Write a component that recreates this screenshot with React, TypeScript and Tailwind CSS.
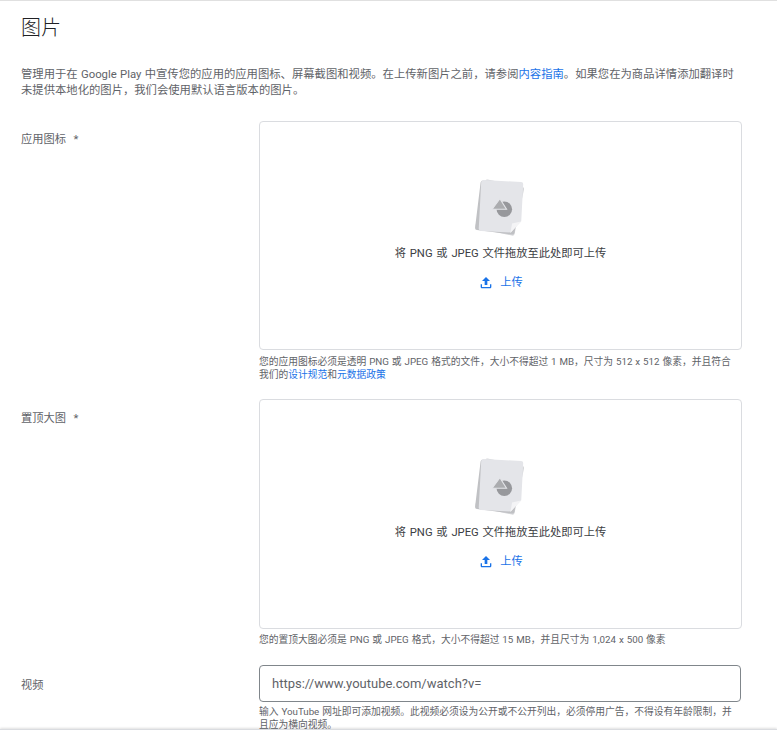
import { ReactNode } from 'react';

function PlaceholderIcon() {
  return (
    <svg width="62" height="62" viewBox="0 0 56 56">
      <rect x="9" y="6" width="36" height="45" rx="2" fill="#d6d7da" transform="rotate(12 27 28)" />
      <rect x="7" y="6" width="36" height="45" rx="2" fill="#c0c1c4" transform="rotate(7 25 28)" />
      <path d="M11 4.500h34a2 2 0 0 1 2 2V40l-9 10.500H11a2 2 0 0 1-2-2v-42a2 2 0 0 1 2-2z" fill="#e4e5e9" transform="rotate(3 28 27)" />
      <path d="M46 41l-9.500 10.500 1.500-8.500z" fill="#f4f4f6" />
      <circle cx="31" cy="30" r="7" fill="#97989c" />
      <path d="M20 30l7-9.500 6 9.500z" fill="#abacaf" stroke="#e4e5e9" strokeWidth="1" />
    </svg>
  );
}

function UploadBox({ height }: { height: string }) {
  return (
    <div className={`flex flex-col items-center justify-center rounded border border-[#dadce0] pb-[4px] ${height}`}>
      <PlaceholderIcon />
      <p className="mt-[8px] text-[11.25px] leading-[16px] [word-spacing:1px] text-[#3c4043]">将 PNG 或 JPEG 文件拖放至此处即可上传</p>
      <div className="mt-[13px] flex items-center gap-[6px] text-[11.25px] leading-[16px] text-[#1a73e8]">
        <svg width="16" height="16" viewBox="0 0 24 24" fill="#1a73e8">
          <path d="M10 15h4V9h4l-6-6-6 6h4z" />
          <path d="M4 14v4c0 1.100.9 2 2 2h12c1.100 0 2-.9 2-2v-4h-2v4H6v-4z" />
        </svg>
        <span>上传</span>
      </div>
    </div>
  );
}

function Row({ label, labelPad, children, className }: { label: string; labelPad: string; children: ReactNode; className?: string }) {
  return (
    <div className={`flex ${className ?? ''}`}>
      <div className={`w-[238px] shrink-0 text-[11.25px] leading-[16px] whitespace-pre-wrap [word-spacing:1px] text-[#5f6368] ${labelPad}`}>{label}</div>
      <div className="w-[483px] shrink-0">{children}</div>
    </div>
  );
}

function Hint({ children, className }: { children: ReactNode; className?: string }) {
  return <p className={`text-[9.75px] leading-[13px] [word-spacing:0.5px] text-[#5f6368] ${className ?? 'mt-[4px]'}`}>{children}</p>;
}

export default function App() {
  return (
    <div className="flex h-[740px] w-[777px] flex-col overflow-hidden bg-white font-['Roboto','Noto_Sans_CJK_SC',sans-serif]">
      <div className="h-[729px] overflow-hidden border-t border-[#e0e0e0] pl-[21px]">
        <h2 className="mt-[13px] text-[20px] leading-[28px] font-light text-[#202124]">图片</h2>
        <p className="mt-[24px] w-[716px] text-[11.33px] leading-[16px] [word-spacing:0.5px] text-[#5f6368]">
          管理用于在 Google Play 中宣传您的应用的应用图标、屏幕截图和视频。在上传新图片之前，请参阅
          <span className="text-[#1a73e8]">内容指南</span>
          。如果您在为商品详情添加翻译时
          <br />
          未提供本地化的图片，我们会使用默认语言版本的图片。
        </p>
        <Row label={'应用图标  *'} labelPad="pt-[11px]" className="mt-[23px]">
          <UploadBox height="h-[229px]" />
          <Hint className="mt-[5px]">
            您的应用图标必须是透明 PNG 或 JPEG 格式的文件，大小不得超过 1 MB，尺寸为 512 x 512 像素，并且符合
            <br />
            我们的<span className="text-[#1a73e8]">设计规范</span>和<span className="text-[#1a73e8]">元数据政策</span>
          </Hint>
        </Row>
        <Row label={'置顶大图  *'} labelPad="pt-[12px]" className="mt-[18px]">
          <UploadBox height="h-[230px]" />
          <Hint>您的置顶大图必须是 PNG 或 JPEG 格式，大小不得超过 15 MB，并且尺寸为 1,024 x 500 像素</Hint>
        </Row>
        <Row label="视频" labelPad="pt-[13px]" className="mt-[19px]">
          <div className="flex h-[37px] w-[482px] items-center rounded border border-[#80868b] pl-[12px] text-[13px] text-[#5f6368]">
            https://www.youtube.com/watch?v=
          </div>
          <Hint className="mt-[3px]">
            输入 YouTube 网址即可添加视频。此视频必须设为公开或不公开列出，必须停用广告，不得设有年龄限制，并
            <br />
            且应为横向视频。
          </Hint>
        </Row>
      </div>
      <div className="flex-1 border-t border-[#dadce0] bg-white shadow-[0_-1px_2px_rgba(0,0,0,0.12)]" />
    </div>
  );
}
